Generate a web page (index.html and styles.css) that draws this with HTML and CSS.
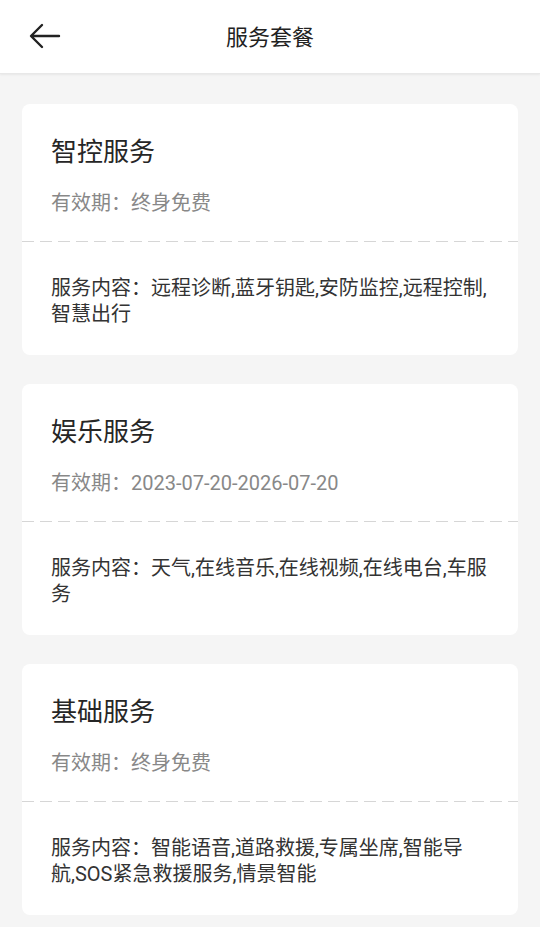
FILE: index.html
```html
<!DOCTYPE html>
<html lang="zh-CN">
<head>
    <meta charset="utf-8">
    <title>服务套餐</title>
    <link rel="stylesheet" href="styles.css">
</head>
<body>

  <div class="header">
    <a class="back" href="#">
      <svg width="32" height="26" viewBox="0 0 32 26">
        <path d="M30 13H3M13 2L2 13l11 11" fill="none" stroke="#222" stroke-width="2.4" stroke-linecap="round" stroke-linejoin="round"/>
      </svg>
    </a>
    <div class="title">服务套餐</div>
  </div>

  <div class="list">
    <div class="card">
      <div class="card-top">
        <div class="name">智控服务</div>
        <div class="meta">有效期：终身免费</div>
      </div>
      <div class="content">服务内容：远程诊断,蓝牙钥匙,安防监控,远程控制,智慧出行</div>
    </div>

    <div class="card">
      <div class="card-top">
        <div class="name">娱乐服务</div>
        <div class="meta">有效期：2023-07-20-2026-07-20</div>
      </div>
      <div class="content">服务内容：天气,在线音乐,在线视频,在线电台,车服务</div>
    </div>

    <div class="card">
      <div class="card-top">
        <div class="name">基础服务</div>
        <div class="meta">有效期：终身免费</div>
      </div>
      <div class="content">服务内容：智能语音,道路救援,专属坐席,智能导航,SOS紧急救援服务,情景智能</div>
    </div>
  </div>

</body>
</html>
```

FILE: styles.css
```css
html {
    height: 100%;
}

body {
    margin: 0;
    padding: 0;
    background: #f5f5f5;
    color: #333;
    font-family: Roboto, "Noto Sans CJK SC", sans-serif;
    min-height: 100%;
}

.header {
    height: 74px;
    background: #fff;
    display: flex;
    align-items: center;
    justify-content: center;
    position: relative;
    box-shadow: 0 1px 2px rgba(0,0,0,0.06);
    border-bottom: 1px solid #e8e8e8;
    box-sizing: border-box;
}

.back {
    position: absolute;
    left: 29px;
    top: 23px;
    display: block;
    line-height: 0;
}

.title {
    font-size: 22px;
    color: #222;
    margin-top: -3px;
}

.list {
    padding: 30px 22px 12px;
    display: flex;
    flex-direction: column;
    gap: 29px;
}

.card {
    background: #fff;
    border-radius: 8px;
}

.card-top {
    padding: 32px 29px 25px;
    background-image: repeating-linear-gradient(to right, #d6d6d6 0 12px, transparent 12px 18px);
    background-size: 100% 1px;
    background-repeat: no-repeat;
    background-position: left bottom;
}

.name {
    font-size: 26px;
    line-height: 32px;
    color: #262626;
}

.meta {
    font-size: 20px;
    line-height: 28px;
    color: #888;
    margin-top: 21px;
}

.content {
    padding: 33px 29px 28px;
    font-size: 20px;
    line-height: 26px;
    color: #333;
}
```
